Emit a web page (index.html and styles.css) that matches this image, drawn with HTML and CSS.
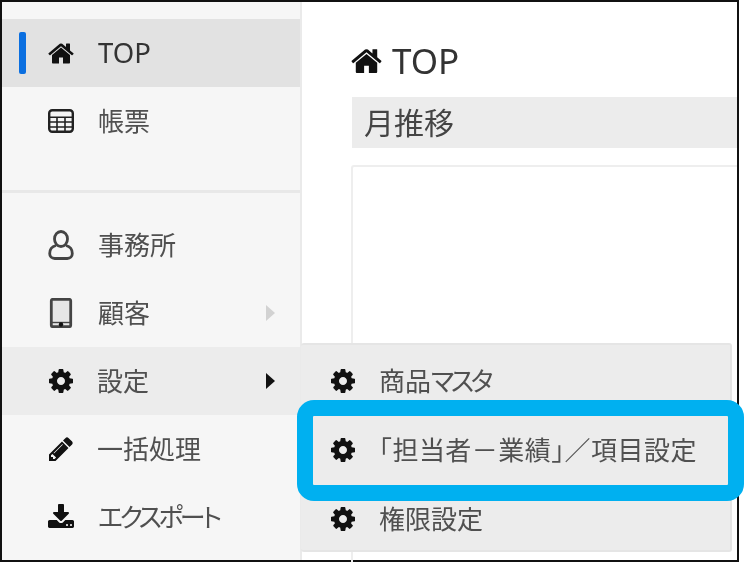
FILE: index.html
```html
<!DOCTYPE html>
<html lang="ja">
<head>
<meta charset="utf-8">
<title>TOP</title>
<link rel="stylesheet" href="styles.css">
</head>
<body>
<svg class="defs" width="0" height="0" aria-hidden="true">
  <symbol id="i-home" viewBox="64 192 1664 1344"><path d="M1472 992v480q0 26-19 45t-45 19h-384v-384h-256v384h-384q-26 0-45-19t-19-45v-480q0-1 .5-3t.5-3l575-474 575 474q1 2 1 6zm223-69l-62 74q-8 9-21 11h-3q-13 0-21-7l-692-577-692 577q-12 8-24 7-13-2-21-11l-62-74q-8-10-7-23.5t11-21.5l719-599q32-26 76-26t76 26l244 204v-195q0-14 9-23t23-9h192q14 0 23 9t9 23v408l219 182q10 8 11 21.5t-7 23.5z"/></symbol>
  <symbol id="i-cog" viewBox="128 128 1536 1536"><path d="M1152 896q0-106-75-181t-181-75-181 75-75 181 75 181 181 75 181-75 75-181zm512-109v222q0 12-8 23t-20 13l-185 28q-19 54-39 91 35 50 107 138 10 12 10 25t-9 23q-27 37-99 108t-94 71q-12 0-26-9l-138-108q-44 23-91 38-16 136-29 186-7 28-36 28h-222q-14 0-24.5-8.5t-11.5-21.5l-28-184q-49-16-90-37l-141 107q-10 9-25 9-14 0-25-11-126-114-165-168-7-10-7-23 0-12 8-23 15-21 51-66.5t54-70.5q-27-50-41-99l-183-27q-13-2-21-12.5t-8-23.5v-222q0-12 8-23t19-13l186-28q14-46 39-92-40-57-107-138-10-12-10-24 0-10 9-23 26-36 98.5-107.5t94.5-71.5q13 0 26 10l138 107q44-23 91-38 16-136 29-186 7-28 36-28h222q14 0 24.5 8.5t11.5 21.5l28 184q49 16 90 37l142-107q9-9 24-9 13 0 25 10 129 119 165 170 7 8 7 22 0 12-8 23-15 21-51 66.5t-54 70.5q26 50 41 98l183 28q13 2 21 12.5t8 23.5z"/></symbol>
  <symbol id="i-pencil" viewBox="128 128 1536 1536"><path d="M491 1536l91-91-235-235-91 91v107h128v128h107zm523-928q0-22-22-22-10 0-17 7l-542 542q-7 7-7 17 0 22 22 22 10 0 17-7l542-542q7-7 7-17zm-54-192l416 416-832 832h-416v-416zm683 96q0 53-37 90l-166 166-416-416 166-165q36-38 90-38 53 0 91 38l235 234q37 39 37 91z"/></symbol>
  <symbol id="i-download" viewBox="64 128 1664 1408"><path d="M1344 1344q0-26-19-45t-45-19-45 19-19 45 19 45 45 19 45-19 19-45zm256 0q0-26-19-45t-45-19-45 19-19 45 19 45 45 19 45-19 19-45zm128-224v320q0 40-28 68t-68 28h-1472q-40 0-68-28t-28-68v-320q0-40 28-68t68-28h465l135 136q58 56 136 56t136-56l136-136h464q40 0 68 28t28 68zm-325-569q17 41-14 70l-448 448q-18 19-45 19t-45-19l-448-448q-31-29-14-70 17-39 59-39h256v-448q0-26 19-45t45-19h256q26 0 45 19t19 45v448h256q42 0 59 39z"/></symbol>
</svg>

<div class="frame">
  <nav class="sidebar">
    <ul class="group">
      <li class="row row-active">
        <svg class="icon icon-home"><use href="#i-home"/></svg><span class="label label-dark">TOP</span>
      </li>
      <li class="row">
        <svg class="icon icon-table" viewBox="0 0 26 24"><rect x="1.2" y="1.2" width="23.6" height="21.6" rx="3" class="line"/><path d="M1 8.2h24M1 13h24M1 18h24M9 8v14M17 8v14" class="line thin"/></svg><span class="label">帳票</span>
      </li>
    </ul>
    <ul class="group group-second">
      <li class="row">
        <svg class="icon icon-user" viewBox="0 0 26 30"><ellipse cx="13" cy="9" rx="6.500" ry="7.500" class="line"/><path d="M8 15.500C4 16.500 1.700 19.500 1.700 23.500c0 3 2 5 5 5h12.600c3 0 5-2 5-5 0-4-2.300-7-6.300-8" class="line"/></svg><span class="label">事務所</span>
      </li>
      <li class="row">
        <svg class="icon icon-tablet" viewBox="0 0 22 30"><rect x="1.300" y="1.300" width="19.400" height="27.400" rx="1.500" class="line tablet-body"/><path d="M2 24.500h18" class="line thin"/><circle cx="11" cy="26.500" r="2.200"/></svg><span class="label">顧客</span><span class="chevron chevron-muted"></span>
      </li>
      <li class="row row-open">
        <svg class="icon icon-small"><use href="#i-cog"/></svg><span class="label">設定</span><span class="chevron"></span>
      </li>
      <li class="row">
        <svg class="icon icon-small"><use href="#i-pencil"/></svg><span class="label">一括処理</span>
      </li>
      <li class="row">
        <svg class="icon icon-cog"><use href="#i-download"/></svg><span class="label label-kana">エクスポート</span>
      </li>
    </ul>
  </nav>

  <main class="content">
    <h1 class="title"><svg class="title-icon"><use href="#i-home"/></svg><span>TOP</span></h1>
    <h2 class="bar">月推移</h2>
    <section class="panel"></section>
  </main>

  <ul class="submenu">
    <li class="sub-row"><svg class="icon icon-small"><use href="#i-cog"/></svg><span class="label">商品<span class="label-kana">マスタ</span></span></li>
    <li class="sub-row"><svg class="icon icon-small"><use href="#i-cog"/></svg><span class="label label-wide">｢担当者－業績｣／項目設定</span></li>
    <li class="sub-row"><svg class="icon icon-small"><use href="#i-cog"/></svg><span class="label">権限設定</span></li>
  </ul>

  <div class="highlight"></div>
</div>
</body>
</html>
```

FILE: styles.css
```css
* {
  box-sizing: border-box;
}

html,
body {
  margin: 0;
  padding: 0;
  background: #fff;
}

body {
  font-family: "Noto Sans", "Noto Sans CJK JP", sans-serif;
  color: #505050;
}

ul {
  list-style: none;
  margin: 0;
  padding: 0;
}

.defs {
  position: absolute;
}

.frame {
  position: relative;
  display: flex;
  width: 739px;
  height: 562px;
  border: 2px solid #111;
}

.sidebar {
  flex: 0 0 300px;
  height: 100%;
  padding-top: 17px;
  background: #f6f6f6;
  border-right: 2px solid #eaeaea;
  filter: blur(0.6px);
}

.group-second {
  margin-top: 35px;
  padding-top: 18px;
  border-top: 3px solid #e8e8e8;
}

.row {
  position: relative;
  display: flex;
  align-items: center;
  height: 68px;
  padding-left: 46px;
  padding-right: 25px;
}

.row-active {
  background: #e2e2e2;
}

.row-active::before {
  content: "";
  position: absolute;
  left: 17px;
  top: 13px;
  width: 7px;
  height: 42px;
  border-radius: 2px;
  background: #0b6fe0;
}

.row-open {
  background: #ececec;
}

.icon {
  flex: 0 0 26px;
  width: 26px;
  height: 26px;
  margin-right: 24px;
  fill: #111;
}

.icon-small {
  flex-basis: 24px;
  width: 24px;
  height: 24px;
  margin-left: 1px;
  margin-right: 24px;
}

.icon-home {
  height: 22px;
}

.icon-table {
  height: 24px;
}

.icon-user,
.icon-tablet {
  height: 30px;
}

.line {
  fill: none;
  stroke: #222;
  stroke-width: 2.4;
}

.thin {
  stroke-width: 1.6;
}

.icon-user .line,
.icon-tablet .line {
  stroke: #444;
  stroke-width: 2.8;
}

.icon-tablet .tablet-body {
  fill: #e6e6e6;
}

.icon-tablet .thin {
  stroke-width: 1.4;
}

.label {
  font-size: 26px;
  line-height: 34px;
  white-space: nowrap;
}

.label-dark {
  font-size: 27.5px;
  color: #333;
}

.label-kana {
  font-feature-settings: "palt";
  letter-spacing: -3.5px;
}

.label-wide {
  letter-spacing: 0.45px;
}

.chevron {
  margin-left: auto;
  width: 0;
  height: 0;
  border-style: solid;
  border-width: 8px 0 8px 9px;
  border-color: transparent transparent transparent #111;
}

.chevron-muted {
  border-left-color: #d2d2d2;
}

.content {
  flex: 1;
  min-width: 0;
  height: 100%;
  padding: 33px 0 0 50px;
  filter: blur(0.6px);
}

.title {
  display: flex;
  align-items: center;
  gap: 10px;
  margin: 0 0 0 -1px;
  height: 50px;
  font-size: 35px;
  font-weight: 400;
  color: #333;
}

.title-icon {
  width: 31px;
  height: 25px;
  fill: #111;
}

.bar {
  display: flex;
  align-items: center;
  height: 51px;
  margin: 12px 0 0;
  padding: 0 0 4px 12px;
  background: #ececec;
  font-size: 30px;
  font-weight: 400;
  color: #444;
}

.panel {
  height: 420px;
  margin: 17px 0 0 -1px;
  border: 2px solid #eeeeee;
  border-right: 0;
  border-radius: 3px 0 0 3px;
}

.submenu {
  position: absolute;
  left: 299px;
  top: 341px;
  width: 431px;
  height: 209px;
  padding-top: 1px;
  background: #ececec;
  border: 2px solid #e5e5e5;
  border-width: 2px 2px 2px 0;
  border-radius: 3px;
  filter: blur(0.6px);
}

.sub-row {
  display: flex;
  align-items: center;
  height: 69px;
  padding-left: 29px;
}

.highlight {
  position: absolute;
  left: 295px;
  top: 398px;
  width: 447px;
  height: 101px;
  border: 16px solid #00b0f0;
  border-radius: 17px;
}
```
